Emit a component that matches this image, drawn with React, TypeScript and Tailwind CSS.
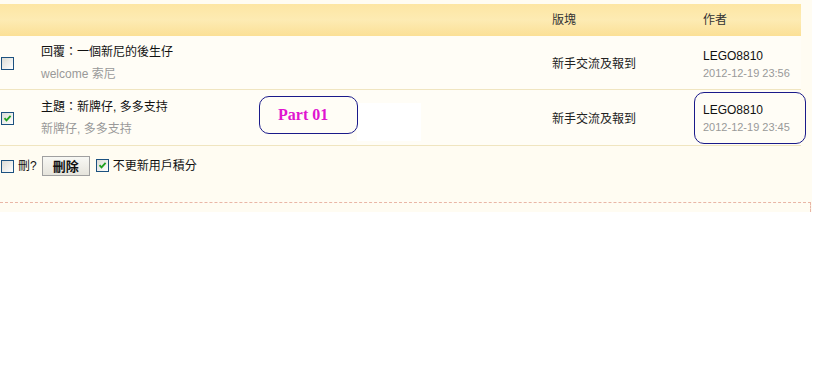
import React from 'react';

const cjk = { fontFamily: '"Liberation Sans", "Noto Sans CJK TC", sans-serif' };

const Box: React.FC<{ checked?: boolean }> = ({ checked }) => (
  <span className="inline-flex h-[13px] w-[13px] items-center justify-center border border-[#1c5180] bg-gradient-to-br from-[#dcdcd6] to-[#ffffff]">
    {checked && (
      <svg width="9" height="9" viewBox="0 0 9 9">
        <path d="M1.5 4.2 L3.5 6.4 L7.6 1.8" stroke="#21a121" strokeWidth="1.8" fill="none" />
      </svg>
    )}
  </span>
);

type Row = {
  title: string;
  sub: string;
  forum: string;
  author: string;
  date: string;
  checked: boolean;
  marked?: boolean;
};

const rows: Row[] = [
  { title: '回覆：一個新尼的後生仔', sub: 'welcome 索尼', forum: '新手交流及報到', author: 'LEGO8810', date: '2012-12-19 23:56', checked: false },
  { title: '主題：新牌仔, 多多支持', sub: '新牌仔, 多多支持', forum: '新手交流及報到', author: 'LEGO8810', date: '2012-12-19 23:45', checked: true, marked: true },
];

export default function App() {
  return (
    <div className="h-[384px] w-[820px] bg-white text-[12px] text-[#222]" style={cjk}>
      <div className="flex h-[212px] w-[812px] flex-col bg-[#fffcf2] pt-[4px]">
        <div className="w-[801px]">
          {/* header */}
          <div className="flex h-[32px] items-center bg-gradient-to-b from-[#fde6a3] via-[#fdebb3] to-[#fbe096] text-[#333]">
            <div className="w-[552px]" />
            <div className="w-[151px]">版塊</div>
            <div className="w-[98px]">作者</div>
          </div>

          {rows.map((r, i) => (
            <div key={i} className={`flex items-center border-b border-[#f0e5c0] bg-[#fffdf6] ${r.marked ? 'h-[56px]' : 'h-[54px]'}`}>
              <div className="flex w-[41px] items-center pl-[1px] pt-[1px]">
                <Box checked={r.checked} />
              </div>
              <div className="relative flex h-full flex-1 flex-col justify-center gap-[6px]">
                <div className="leading-[16px] text-[#111]">{r.title}</div>
                <div className="leading-[16px] text-[#999]">{r.sub}</div>
                {r.marked && (
                  <>
                    <div className="absolute left-[316px] top-[13px] h-[38px] w-[64px] bg-white" />
                    <div className="absolute left-[218px] top-[6px] flex h-[38px] w-[99px] items-center rounded-[10px] border border-[#1a1a8a] pl-[18px] text-[16px] font-bold text-[#e014d0]" style={{ fontFamily: '"Liberation Serif", serif' }}>
                      Part 01
                    </div>
                  </>
                )}
              </div>
              <div className="w-[151px] pt-[2px] text-[#222]">{r.forum}</div>
              <div className="w-[98px]">
                <div className={r.marked ? 'ml-[-9px] flex h-[52px] w-[112px] flex-col justify-center gap-[2px] rounded-[10px] border border-[#1a1a8a] pl-[8px]' : 'flex flex-col gap-[2px] pt-[2px]'}>
                  <div className="leading-[16px] text-[#111]">{r.author}</div>
                  <div className="text-[11px] leading-[14px] text-[#999]">{r.date}</div>
                </div>
              </div>
            </div>
          ))}

          {/* footer actions */}
          <div className="flex h-[40px] items-center pl-[1px]">
            <Box />
            <span className="ml-[4px] text-[#111]">刪?</span>
            <button className="ml-[5px] h-[20px] w-[48px] border border-[#a0a0a0] bg-gradient-to-b from-[#f8f8f4] to-[#e6e4dc] text-[13px] font-bold text-[#111]">
              刪除
            </button>
            <span className="ml-[6px]">
              <Box checked />
            </span>
            <span className="ml-[4px] text-[#111]">不更新用戶積分</span>
          </div>
        </div>
        <div className="mt-[16px] h-[10px] w-[811px] border-r border-t border-dashed border-[#e9b6a6]" />
      </div>
    </div>
  );
}
